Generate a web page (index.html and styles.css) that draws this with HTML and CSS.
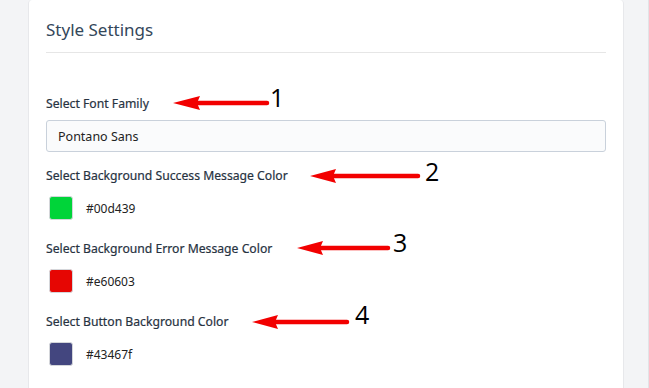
FILE: index.html
```html
<!DOCTYPE html>
<html lang="en-US">
  <head>
    <meta charset="UTF-8">
    <title>Style Settings</title>
    <link rel="stylesheet" href="styles.css">
  </head>
  <body>
    <main class="page">
      <section class="card">
        <h2 class="card-title">Style Settings</h2>
        <form class="settings">
          <div class="field">
            <label class="field-label">Select Font Family</label>
            <div class="text-input">Pontano Sans</div>
          </div>
          <div class="field">
            <label class="field-label">Select Background Success Message Color</label>
            <div class="color-row">
              <span class="swatch swatch-success"></span>
              <span class="hex">#00d439</span>
            </div>
          </div>
          <div class="field">
            <label class="field-label">Select Background Error Message Color</label>
            <div class="color-row">
              <span class="swatch swatch-error"></span>
              <span class="hex">#e60603</span>
            </div>
          </div>
          <div class="field">
            <label class="field-label">Select Button Background Color</label>
            <div class="color-row">
              <span class="swatch swatch-button"></span>
              <span class="hex">#43467f</span>
            </div>
          </div>
        </form>
      </section>
      <!-- annotation arrows over the screenshot -->
      <svg class="notes" width="649" height="388" viewBox="0 0 649 388">
        <g fill="#f20000" stroke="#f20000">
          <line x1="196" y1="103" x2="267" y2="103" stroke-width="4.5" stroke-linecap="round"/>
          <polygon points="173,103 200,96 197,103 200,110" stroke="none"/>
          <line x1="333" y1="176" x2="418" y2="176" stroke-width="4.5" stroke-linecap="round"/>
          <polygon points="310,176 336,169 333,176 336,183" stroke="none"/>
          <line x1="320" y1="248" x2="388" y2="248" stroke-width="4.5" stroke-linecap="round"/>
          <polygon points="297,248 323,241 320,248 323,255" stroke="none"/>
          <line x1="275" y1="322" x2="347" y2="322" stroke-width="4.5" stroke-linecap="round"/>
          <polygon points="252,322 278,315 275,322 278,329" stroke="none"/>
        </g>
        <g class="note-num">
          <text x="270" y="107">1</text>
          <text x="425" y="181">2</text>
          <text x="393" y="252">3</text>
          <text x="355" y="324">4</text>
        </g>
      </svg>
    </main>
  </body>
</html>
```

FILE: styles.css
```css
body {
  margin: 0;
  padding: 0;
  background-color: #f3f4f6;
  font-family: "Noto Sans", Arial, sans-serif;
  color: #2a3746;
}
.page {
  position: relative;
  width: 649px;
  height: 388px;
  overflow: hidden;
  box-sizing: border-box;
  border-right: 1px solid #e2e3e6;
}
.card {
  margin-left: 28px;
  width: 596px;
  min-height: 400px;
  box-sizing: border-box;
  padding: 0 17px;
  background: #fff;
  border: 1px solid #e7e8eb;
  border-top: none;
  border-radius: 4px;
}
.card-title {
  margin: 0;
  padding: 19px 0 11px;
  font-size: 17px;
  line-height: 22px;
  font-weight: 400;
  color: #34475a;
  border-bottom: 1px solid #e6e6e6;
}
.settings {
  display: flex;
  flex-direction: column;
  gap: 15px;
  padding-top: 42px;
}
.settings .field + .field .field-label {
  margin-bottom: 11px;
}
.field:nth-child(n+3) {
  margin-top: 5px;
}
.field-label {
  display: block;
  font-size: 12.2px;
  line-height: 18px;
  color: #27323f;
  margin-bottom: 7px;
  -webkit-text-stroke: 0.2px #27323f;
}
.text-input {
  box-sizing: border-box;
  height: 32px;
  padding: 0 11px;
  display: flex;
  align-items: center;
  font-size: 12.5px;
  color: #222;
  background: #fafbfc;
  border: 1px solid #c9d1db;
  border-radius: 3px;
}
.color-row {
  display: flex;
  align-items: center;
  gap: 13px;
  height: 24px;
  padding-left: 3px;
}
.swatch {
  width: 24px;
  height: 24px;
  box-sizing: border-box;
  border-radius: 3px;
  border: 1px solid #d4d6da;
}
.swatch-success {
  background: #00d439;
}
.swatch-error {
  background: #e60603;
}
.swatch-button {
  background: #43467f;
}
.hex {
  font-size: 12px;
  color: #222;
}
.notes {
  position: absolute;
  top: 0;
  left: 0;
}
.note-num text {
  font-family: "Open Sans", sans-serif;
  font-size: 25px;
  fill: #000;
}
```
